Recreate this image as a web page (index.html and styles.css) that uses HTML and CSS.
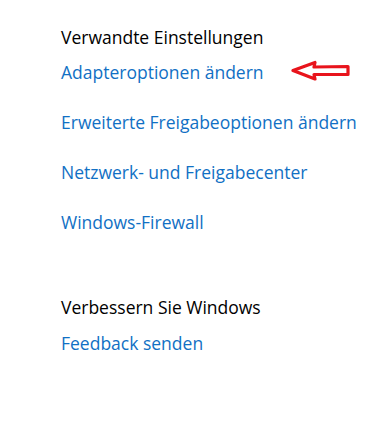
FILE: index.html
```html
<!DOCTYPE html>
<html lang="de">
<head>
<meta charset="utf-8">
<title>Verwandte Einstellungen</title>
<link rel="stylesheet" href="styles.css">
</head>
<body>
<main class="panel">
  <section class="group related">
    <h2 class="group-title">Verwandte Einstellungen</h2>
    <ul class="links">
      <li class="first"><a href="#">Adapteroptionen ändern</a>
        <svg class="arrow" width="60" height="24" viewBox="0 0 60 24" aria-hidden="true">
          <path d="M2 10.5 L24 2.5 L23 7 L57 6.5 L57 14.5 L23 14.5 L24 19 Z" fill="none" stroke="#e8141c" stroke-width="3.2" stroke-linejoin="round"/>
        </svg>
      </li>
      <li><a href="#">Erweiterte Freigabeoptionen ändern</a></li>
      <li><a href="#">Netzwerk- und Freigabecenter</a></li>
      <li><a href="#">Windows-Firewall</a></li>
    </ul>
  </section>
  <section class="group improve">
    <h2 class="group-title">Verbessern Sie Windows</h2>
    <ul class="links">
      <li><a href="#">Feedback senden</a></li>
    </ul>
  </section>
</main>
</body>
</html>
```
FILE: styles.css
```css
html, body {
  margin: 0;
  padding: 0;
  background: #ffffff;
}
body {
  font-family: "Open Sans", "Noto Sans", sans-serif;
  font-size: 17.5px;
  line-height: 20px;
  color: #000000;
}
.panel {
  padding: 27px 0 0 61px;
  display: flex;
  flex-direction: column;
}
.group {
  display: flex;
  flex-direction: column;
}
.group-title {
  margin: 0;
  font-size: 17.5px;
  font-weight: 400;
  line-height: 20px;
  color: #000;
}
.links {
  list-style: none;
  margin: 15px 0 0;
  padding: 0;
  display: flex;
  flex-direction: column;
  gap: 30px;
}
.links li {
  line-height: 20px;
}
.links a {
  color: #1170c4;
  text-decoration: none;
}
.first {
  position: relative;
}
.arrow {
  position: absolute;
  left: 230px;
  top: -2px;
}
.improve {
  margin-top: 65px;
}
.improve .links {
  margin-top: 16px;
}
```
